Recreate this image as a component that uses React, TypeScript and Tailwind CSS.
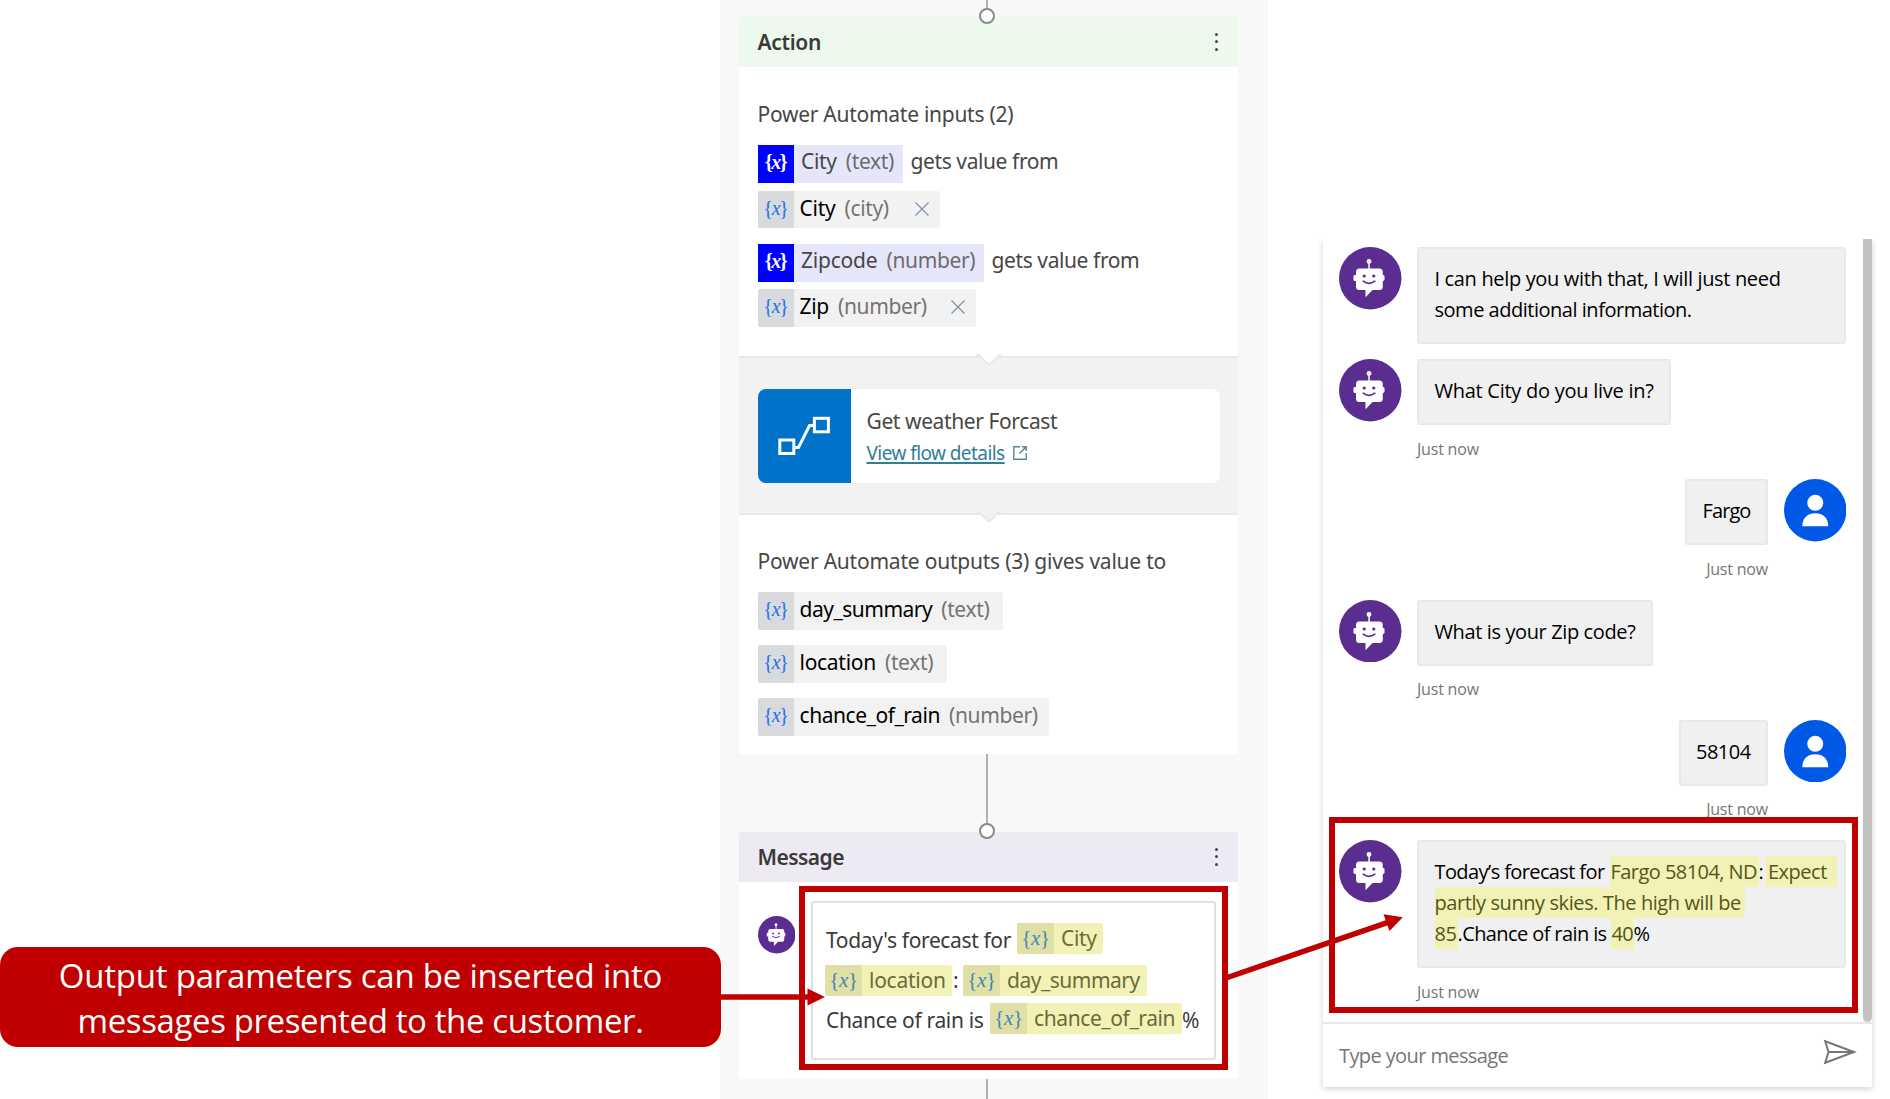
import type { ReactNode } from "react";

function BotAvatar({ className }: { className: string }) {
  return (
    <svg viewBox="0 0 62.5 62.5" className={`shrink-0 ${className}`}>
      <circle cx="31.25" cy="31.25" r="31.25" fill="#5c2d91" />
      <g fill="#fff">
        <circle cx="30" cy="14.5" r="2.4" />
        <rect x="29.3" y="15" width="1.5" height="8" />
        <rect x="17" y="21.6" width="26.8" height="21.4" rx="3.5" />
        <rect x="14.5" y="28" width="31" height="6" rx="1.4" />
        <path d="M26.5 42.5V50.2L34 42.5Z" />
      </g>
      <circle cx="25.2" cy="29" r="1.6" fill="#5c2d91" />
      <circle cx="34.8" cy="29" r="1.6" fill="#5c2d91" />
      <path d="M24.2 34.2Q30 38.6 35.8 34.2" fill="none" stroke="#5c2d91" strokeWidth="1.6" strokeLinecap="round" />
    </svg>
  );
}

function UserAvatar() {
  return (
    <svg viewBox="0 0 62.5 62.5" className="size-[62.5px] shrink-0">
      <circle cx="31.25" cy="31.25" r="31.25" fill="#0059e6" />
      <circle cx="31.25" cy="23.8" r="8" fill="#fff" />
      <path d="M18.3 47.2C18.3 38.5 24 34.2 31.3 34.2S44.3 38.5 44.3 47.2Z" fill="#fff" />
    </svg>
  );
}

function VarMark({ className }: { className: string }) {
  return (
    <span className={`shrink-0 text-center font-['Liberation_Serif',serif] ${className}`}>
      {"{"}
      <i>x</i>
      {"}"}
    </span>
  );
}

function InputChip({ name, type, nameClass, width }: { name: string; type: string; nameClass: string; width: string }) {
  return (
    <div className="flex h-[38px] items-start">
      <div className={`flex h-full bg-[#e6e6fa] ${width}`}>
        <VarMark className="w-9 bg-[#0000ff] text-[20px] leading-[34px] font-bold tracking-[-1.4px] text-white" />
        <span className={`ml-[7.5px] leading-[33px] text-[#484644] ${nameClass}`}>{name}</span>
        <span className="ml-[9px] leading-[33px] tracking-[-0.34px] text-[#6e6c6a]">{type}</span>
      </div>
      <span className="ml-2 leading-[33px] tracking-[-0.4px] text-[#484644]">gets value from</span>
    </div>
  );
}

function ValueChip({ name, type, nameClass, width, removable }: { name: string; type: string; nameClass: string; width: string; removable?: boolean }) {
  return (
    <div className={`flex h-[37.5px] overflow-hidden rounded-[2px] bg-[#f2f2f2] ${width}`}>
      <VarMark className="w-9 bg-[#d8dade] text-[20px] leading-[34px] tracking-[-1.2px] text-[#2270ee]" />
      <span className={`ml-1.5 leading-[35px] text-black ${nameClass}`}>{name}</span>
      <span className="ml-[9px] leading-[35px] tracking-[-0.36px] text-[#767472]">{type}</span>
      {removable && (
        <svg viewBox="0 0 14 14" className="mt-[11px] mr-[11px] ml-auto size-3.5">
          <path d="M0.5 0.5L13.5 13.5M13.5 0.5L0.5 13.5" stroke="#7d93a5" strokeWidth="1.2" />
        </svg>
      )}
    </div>
  );
}

function TokenChip({ name, width, nameClass }: { name: string; width: string; nameClass: string }) {
  return (
    <span className={`flex h-[31px] rounded-[2px] bg-[#f2f2b6] ${width}`}>
      <VarMark className="w-[37px] rounded-l-[2px] bg-[#dfdfa6] text-[21px] leading-[30px] tracking-[-0.4px] text-[#3f87b8]" />
      <span className={`ml-[7px] leading-[31px] text-[#6b6b3a] ${nameClass}`}>{name}</span>
    </span>
  );
}

function CardHeader({ title, color, tracking }: { title: string; color: string; tracking: string }) {
  return (
    <div className={`flex h-[50px] items-center justify-between rounded-t-[2px] pr-5 pl-[18.5px] ${color}`}>
      <span className={`leading-7 font-semibold text-[#3b3a39] ${tracking}`}>{title}</span>
      <div className="mb-px flex flex-col gap-[4.5px]">
        <span className="size-[3px] rounded-full bg-[#484644]" />
        <span className="size-[3px] rounded-full bg-[#484644]" />
        <span className="size-[3px] rounded-full bg-[#484644]" />
      </div>
    </div>
  );
}

function Connector({ height }: { height: string }) {
  return <div className={`ml-[246.5px] w-[2.5px] bg-[#b0b0b0] ${height}`} />;
}

function Node({ className }: { className: string }) {
  return <div className={`absolute left-[240px] size-4 rounded-full border-2 border-[#8a8a8a] bg-white ${className}`} />;
}

function Notch({ fill }: { fill: string }) {
  return (
    <svg viewBox="0 0 26 14" className="absolute -top-[5px] left-[237px] h-3.5 w-[26px]">
      <path d="M0 0H26V3L23 3L13 12.5L3 3L0 3Z" fill={fill} />
      <path d="M0.5 2.2H3L13 12L23 2.2H25.5" fill="none" stroke="#e6e8ea" strokeWidth="1.8" />
    </svg>
  );
}

function Bubble({ className, children }: { className: string; children: ReactNode }) {
  return (
    <div className={`rounded-[3px] border-2 border-[#e8e8e8] bg-[#f0f0f0] pt-3.5 pl-[15.5px] whitespace-nowrap ${className}`}>
      {children}
    </div>
  );
}

function Stamp({ className }: { className: string }) {
  return <div className={`text-[16px] leading-5 tracking-[-0.2px] text-[#767676] ${className}`}>Just now</div>;
}

function BotTurn({ children }: { children: ReactNode }) {
  return (
    <div className="h-[120.3px]">
      <div className="flex gap-[15.5px]">
        <BotAvatar className="size-[62.5px]" />
        {children}
      </div>
      <Stamp className="mt-[13.5px] ml-[78px]" />
    </div>
  );
}

function UserTurn({ children }: { children: ReactNode }) {
  return (
    <div className="h-[120.3px]">
      <div className="flex justify-end gap-4">
        {children}
        <UserAvatar />
      </div>
      <Stamp className="mt-[13.5px] mr-[78px] text-right" />
    </div>
  );
}

function Hl({ className, children }: { className: string; children: ReactNode }) {
  return <span className={`bg-[#f2f2b6] text-[#55551c] ${className}`}>{children}</span>;
}

export default function App() {
  return (
    <div className="relative flex h-[1099px] w-[1890px] overflow-hidden bg-white">
      <div className="w-[720px] shrink-0 pt-[947px]">
        <div className="relative z-10 h-[100px] w-[721px] rounded-[18px] bg-[#c00000] pt-[5.5px] text-center font-['Open_Sans',sans-serif] text-[33px] leading-[45px] whitespace-nowrap text-white">
          <p className="tracking-[-0.22px]">Output parameters can be inserted into</p>
          <p className="tracking-[-0.38px]">messages presented to the customer.</p>
        </div>
      </div>

      <div className="w-[548px] shrink-0 bg-[#f8f8f8] pl-[19px] font-['Noto_Sans',sans-serif] text-[21px] whitespace-nowrap">
        <div className="relative w-[499px]">
          <Connector height="h-[17px]" />
          <Node className="top-[7.5px]" />
          <div>
            <CardHeader title="Action" color="bg-[#edf9ed]" tracking="tracking-[-0.33px]" />
            <div className="h-[289px] bg-white pt-[33px] pl-[18.5px]">
              <h2 className="leading-7 tracking-[-0.27px] text-[#484644]">Power Automate inputs (2)</h2>
              <div className="mt-[17px] flex flex-col gap-[7.5px]">
                <InputChip name="City" type="(text)" width="w-[145px]" nameClass="tracking-[-0.32px]" />
                <ValueChip name="City" type="(city)" width="w-[182px]" nameClass="tracking-[-0.25px]" removable />
              </div>
              <div className="mt-[15.5px] flex flex-col gap-[7.5px]">
                <InputChip name="Zipcode" type="(number)" width="w-[226px]" nameClass="tracking-[-0.21px]" />
                <ValueChip name="Zip" type="(number)" width="w-[218px]" nameClass="tracking-[-0.3px]" removable />
              </div>
            </div>
            <div className="relative h-[157px] border-t-2 border-[#e6e8ea] bg-[#f2f2f2] px-[18.5px] pt-[31px]">
              <Notch fill="#ffffff" />
              <div className="flex h-[94px] w-[462px] overflow-hidden rounded-lg bg-white">
                <div className="flex w-[93px] items-center justify-center bg-[#0072c9]">
                  <svg viewBox="0 0 52 40" className="h-10 w-[52px]" fill="none" stroke="#fff" strokeWidth="3">
                    <rect x="1.8" y="24" width="14" height="13.5" />
                    <rect x="36.4" y="2.3" width="14" height="13.5" />
                    <path d="M16 31.5H20.5L31.5 9.5H36" />
                  </svg>
                </div>
                <div className="pt-[17.5px] pl-4">
                  <p className="leading-7 tracking-[-0.4px] text-[#484644]">Get weather Forcast</p>
                  <div className="mt-[5px] flex items-center">
                    <span className="text-[19px] leading-[27px] tracking-[-0.57px] text-[#2f7f95] underline decoration-2 underline-offset-2 [text-decoration-skip-ink:none]">View flow details</span>
                    <svg viewBox="0 0 14 14" className="ml-2 size-3.5" fill="none" stroke="#4f8a9c" strokeWidth="1.4">
                      <path d="M7 0.8H0.8V13.2H13.2V7M9 0.8H13.2V5M13.2 0.8L6.5 7.5" />
                    </svg>
                  </div>
                </div>
              </div>
            </div>
            <div className="relative h-[241px] rounded-b-[2px] border-t-2 border-[#e6e8ea] bg-white pt-[31.5px] pl-[18.5px]">
              <Notch fill="#f2f2f2" />
              <h2 className="leading-7 tracking-[-0.22px] text-[#484644]">Power Automate outputs (3) gives value to</h2>
              <div className="mt-[17.5px] flex flex-col gap-[15.5px]">
                <ValueChip name="day_summary" type="(text)" width="w-[245px]" nameClass="tracking-[-0.5px]" />
                <ValueChip name="location" type="(text)" width="w-[189px]" nameClass="tracking-[-0.28px]" />
                <ValueChip name="chance_of_rain" type="(number)" width="w-[291px]" nameClass="tracking-[-0.45px]" />
              </div>
            </div>
          </div>
          <Connector height="h-[78px]" />
          <Node className="top-[822.5px]" />
          <div>
            <CardHeader title="Message" color="bg-[#eeeaf4]" tracking="tracking-[-0.55px]" />
            <div className="flex h-[197px] items-start rounded-b-[2px] bg-white pl-[18.5px]">
              <BotAvatar className="mt-[34px] size-[37.5px]" />
              <div className="mt-[19px] ml-[16px] flex h-[159px] w-[405px] flex-col gap-[7.5px] rounded-[3px] border-2 border-[#e0e0e0] pt-5 pl-[12px]">
                <div className="flex pl-px text-[#3b3a39]">
                  <span className="w-[191px] leading-[34px] tracking-[-0.37px]">Today's forecast for</span>
                  <TokenChip name="City" width="w-[86px]" nameClass="tracking-[-0.32px]" />
                </div>
                <div className="flex text-[#3b3a39]">
                  <TokenChip name="location" width="w-[127px]" nameClass="tracking-[-0.25px]" />
                  <span className="w-[11px] pl-[1px] leading-[31px]">:</span>
                  <TokenChip name="day_summary" width="w-[184px]" nameClass="tracking-[-0.5px]" />
                </div>
                <div className="flex pl-px text-[#3b3a39]">
                  <span className="w-[164px] leading-[34px] tracking-[-0.33px]">Chance of rain is</span>
                  <TokenChip name="chance_of_rain" width="w-[192px]" nameClass="tracking-[-0.4px]" />
                  <span className="leading-[34px]">%</span>
                </div>
              </div>
            </div>
          </div>
          <Connector height="h-5" />
        </div>
      </div>

      <div className="mt-[239px] ml-[55px] h-[848px] w-[549px] shrink-0 font-['Open_Sans',sans-serif] text-[20px] leading-[31px] text-black [clip-path:inset(0_-12px_-12px_-12px)]">
        <div className="flex h-full flex-col bg-white shadow-[0_2px_6px_rgba(0,0,0,0.18)]">
          <div className="flex h-[783px] justify-between">
            <div className="ml-4 w-[507px] pt-2">
              <div className="mb-[15.5px] flex gap-[15.5px]">
                <BotAvatar className="size-[62.5px]" />
                <Bubble className="h-[96.5px] w-[429px]">
                  <p className="tracking-[-0.34px]">I can help you with that, I will just need</p>
                  <p className="tracking-[-0.48px]">some additional information.</p>
                </Bubble>
              </div>
              <BotTurn>
                <Bubble className="h-[66px] w-[254px] tracking-[-0.26px]">What City do you live in?</Bubble>
              </BotTurn>
              <UserTurn>
                <Bubble className="h-[66px] w-[82.5px] tracking-[-0.9px]">Fargo</Bubble>
              </UserTurn>
              <BotTurn>
                <Bubble className="h-[66px] w-[235.5px] tracking-[-0.38px]">What is your Zip code?</Bubble>
              </BotTurn>
              <UserTurn>
                <Bubble className="h-[66px] w-[89px] tracking-[-0.5px]">58104</Bubble>
              </UserTurn>
              <div className="flex gap-[15.5px]">
                <BotAvatar className="size-[62.5px]" />
                <Bubble className="h-[128px] w-[429px]">
                  <div className="flex">
                    <span className="w-[175px] tracking-[-0.61px]">Today’s forecast for</span>
                    <Hl className="w-[149px] pl-px tracking-[-0.55px]">Fargo 58104, ND</Hl>
                    <span className="w-[7.5px]">:</span>
                    <Hl className="w-[70.5px] pl-0.5 tracking-[-0.5px]">Expect</Hl>
                  </div>
                  <div className="flex">
                    <Hl className="w-[310px] tracking-[-0.42px]">partly sunny skies. The high will be</Hl>
                  </div>
                  <div className="flex">
                    <Hl className="w-[23px] tracking-[-0.4px]">85</Hl>
                    <span className="w-[153px] tracking-[-0.6px]">.Chance of rain is</span>
                    <Hl className="w-[23px] pl-px tracking-[-0.6px]">40</Hl>
                    <span>%</span>
                  </div>
                </Bubble>
              </div>
              <Stamp className="mt-[14px] ml-[78px]" />
            </div>
            <div className="w-[9.5px] rounded-b-[5px] bg-[#c2c2c2]" />
          </div>
          <div className="flex flex-1 items-center justify-between border-t-2 border-[#e8e8e8] pr-[15px] pl-4 text-[#767676]">
            <span className="tracking-[-0.6px]">Type your message</span>
            <svg viewBox="0 0 34 26" className="mb-2 h-[26px] w-[34px]" fill="none" stroke="#767676" strokeWidth="2" strokeLinejoin="miter">
              <path d="M2.2 2.2L31 13L2.2 23.8L5.5 13ZM5.5 13H31" />
            </svg>
          </div>
        </div>
      </div>

      <div className="absolute top-[886px] left-[799px] h-[184px] w-[429px] border-[6px] border-[#c00000]" />
      <div className="absolute top-[817px] left-[1329px] h-[196px] w-[529px] border-[6px] border-[#c00000]" />
      <svg viewBox="0 0 1890 1099" className="pointer-events-none absolute inset-0 h-[1099px] w-[1890px]">
        <path d="M720 997H810M1226 978L1388 922.4" stroke="#c00000" strokeWidth="5.5" />
        <path d="M807.5 988.5L825 997L807.5 1005.5ZM1383.5 914.3L1402.8 917.3L1389.5 931Z" fill="#c00000" />
      </svg>
    </div>
  );
}
